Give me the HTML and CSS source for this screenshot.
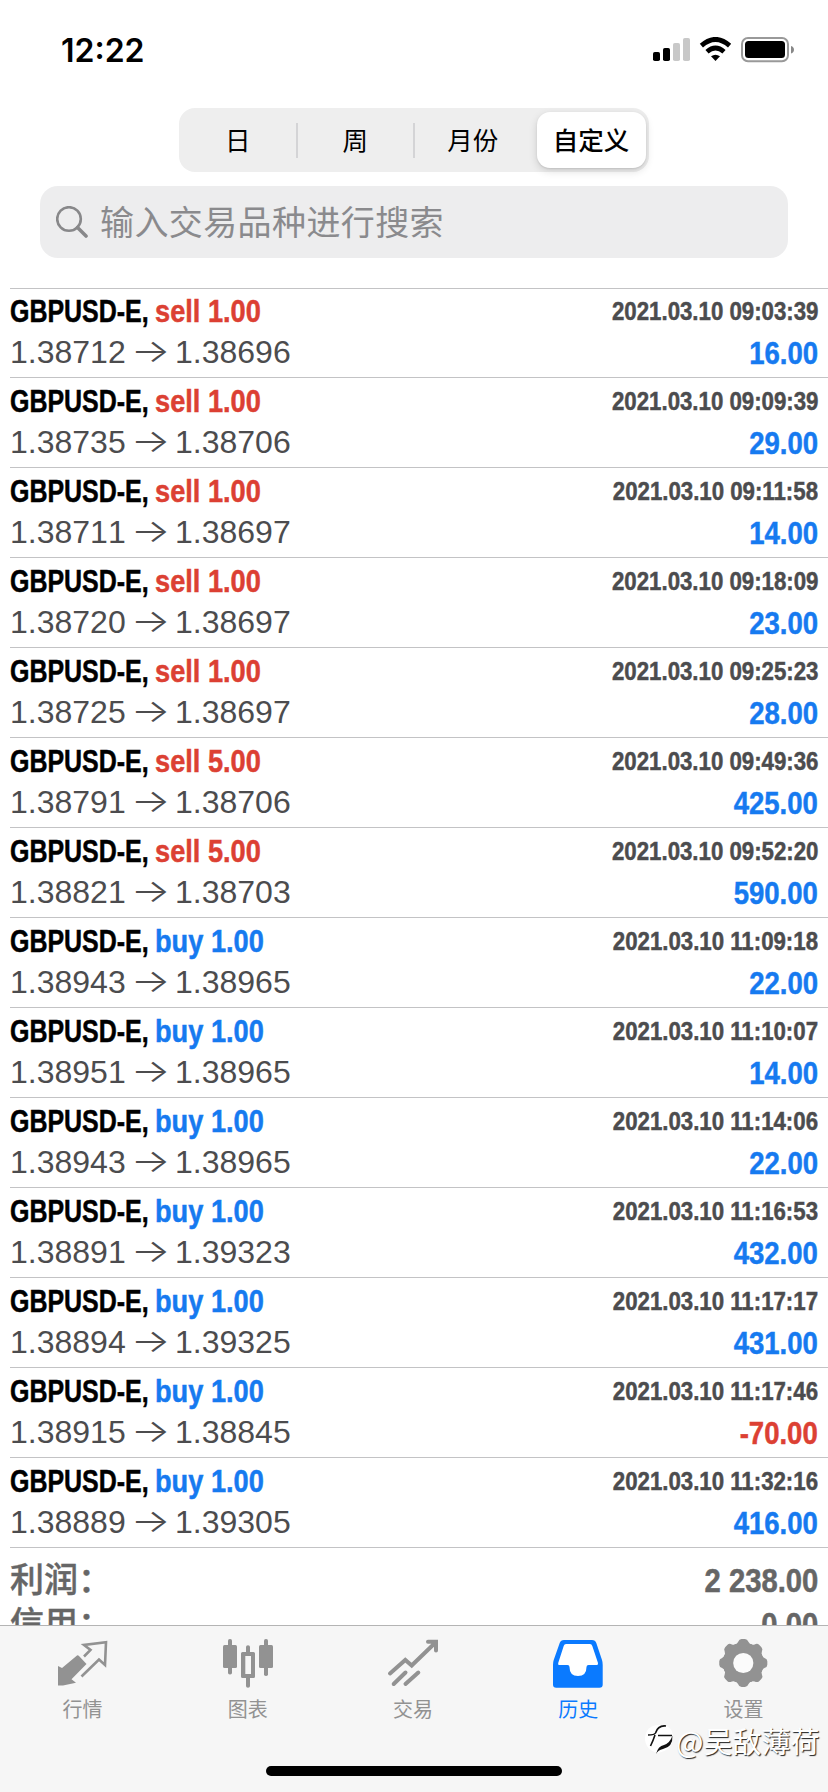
FILE: index.html
```html
<!DOCTYPE html>
<html lang="zh-CN">
<head>
<meta charset="utf-8">
<title>历史</title>
<link rel="stylesheet" href="styles.css">
</head>
<body>
<div class="screen">
  <header class="status">
    <span class="clock">12:22</span>
    <svg class="status-icons" width="142" height="26" viewBox="0 0 142 26">
      <rect x="0" y="15" width="7" height="9" rx="1.8"/>
      <rect x="10" y="11" width="7" height="13" rx="1.8"/>
      <g fill="#c8c8c8"><rect x="20" y="6" width="7" height="18" rx="1.8"/><rect x="30" y="1" width="7" height="23" rx="1.8"/></g>
      <g fill="none" stroke="#000" stroke-width="4.8"><path d="M48.400 8.600Q62.500-3.800 76.600 8.600"/><path d="M54 14.700Q62.500 7.400 71 14.700"/></g>
      <path d="M58 19.300Q62.500 16 67 19.300L62.500 24Z"/>
      <rect x="89" y="1" width="46" height="23.200" rx="6" fill="none" stroke="#999" stroke-width="2"/>
      <rect x="92" y="4" width="40" height="17" rx="3.500"/>
      <path d="M138 9Q141 10 141 12.700Q141 15.500 138 16.500Z" fill="#888"/>
    </svg>
  </header>
  <nav class="segments">
    <span class="seg">日</span><span class="seg seg-line">周</span><span class="seg seg-line">月份</span><span class="seg seg-on">自定义</span>
  </nav>
  <div class="search">
    <svg width="32" height="32" viewBox="0 0 32 32" fill="none" stroke="#88888a"><circle cx="13" cy="13" r="11.800" stroke-width="2.600"/><path d="M21.500 21.500L30 30" stroke-width="3.600" stroke-linecap="round"/></svg>
    <span>输入交易品种进行搜索</span>
  </div>
  <main class="list" id="list"></main>
  <section class="totals">
    <div class="total"><span>利润：</span><span class="sum">2 238.00</span></div>
    <div class="total"><span>信用：</span><span class="sum">0.00</span></div>
  </section>
  <footer class="tabs">
    <div class="tab">
      <svg width="50" height="50" viewBox="0 0 50 50"><path d="M0 28L4 30L19 17.500Q20 17 21 18L28.500 26L13.500 41.300L18 44.700L5 47.500H0Z" fill="#929292"/><path d="M26 18.500L32.500 12L26 7L48 4.300L47 27L41 21.500L23.500 38.500" fill="none" stroke="#929292" stroke-width="2.600"/></svg>
      <span>行情</span>
    </div>
    <div class="tab">
      <svg width="50" height="50" viewBox="0 0 50 50" fill="#929292"><rect x="0" y="7" width="14" height="23" rx="1.500"/><rect x="5" y="1" width="4" height="35.500" rx="1.800"/><path fill-rule="evenodd" d="M19.500 14H30.500Q32 14 32 15.500V38.500Q32 40 30.500 40H19.500Q18 40 18 38.500V15.500Q18 14 19.500 14ZM22.300 18V36H28V18Z"/><path d="M23 14V9Q23 7.300 25 7.300Q27 7.300 27 9V14ZM23 40V48Q23 49.700 25 49.700Q27 49.700 27 48V40Z"/><rect x="36" y="7" width="14" height="23" rx="1.500"/><rect x="41" y="1" width="4" height="37" rx="1.800"/></svg>
      <span>图表</span>
    </div>
    <div class="tab">
      <svg width="50" height="50" viewBox="0 0 50 50" fill="none" stroke="#929292" stroke-width="4" stroke-linecap="round"><path d="M2 35.500L17.300 22L23.700 27.500L47 5M40 3.700H48V12.500M5.700 46L17.500 34.500M17.500 46L30.300 34.500"/></svg>
      <span>交易</span>
    </div>
    <div class="tab tab-on">
      <svg width="50" height="50" viewBox="0 0 50 50"><path d="M11 2H39Q42.300 2 43.300 5L49 22Q49.700 24 49.700 27V46.500Q49.700 49.700 46.500 49.700H3.200Q0 49.700 0 46.500V27Q0 24 .7 22L6.700 5Q7.700 2 11 2Z" fill="#0a7aff"/><path d="M13 6H37Q38.700 6 39.300 8L45 25Q45.300 27 44 27H35.500Q33.500 27 33.500 29Q33.500 38 25 38Q16.500 38 16.500 29Q16.500 27 14.500 27H6Q4.700 27 5.200 25L10.700 8Q11.300 6 13 6Z" fill="#fff"/></svg>
      <span>历史</span>
    </div>
    <div class="tab">
      <svg width="50" height="52" viewBox="0 0 50 52" fill="#929292"><circle cx="25.300" cy="26" r="21"/><path id="tooth" d="M16 7Q19 6.500 20 4Q21 1 23.500 1H27Q29.500 1 30.600 4Q31.600 6.500 34.600 7V45Q31.600 45.500 30.600 48Q29.500 51 27 51H23.500Q21 51 20 48Q19 45.500 16 45Z"/><use href="#tooth" transform="rotate(45 25.300 26)"/><use href="#tooth" transform="rotate(90 25.300 26)"/><use href="#tooth" transform="rotate(135 25.300 26)"/><circle cx="25.300" cy="26" r="10.500" fill="#fbfbfb"/></svg>
      <span>设置</span>
    </div>
    <div class="home"></div>
    <div class="mark">
      <svg width="32" height="34" viewBox="0 0 32 34"><path d="M16 2Q29 2 29 15Q28 27 14 30Q1 27 1 15Q2 2 16 2Z" fill="#fff"/><path d="M22 3Q14 2 11.500 10Q10.500 12 4 12M11 12Q9 18 6.500 23M14 12.500H28" fill="none" stroke="#111" stroke-width="1.600"/><path d="M28.500 12.500Q29 24 19 26Q14 27 12 31Q14 23 20 22Q26 20 28.500 12.500Z" fill="#111"/></svg>
      <span>@吴敌薄荷</span>
    </div>
  </footer>
</div>
<script src="history.js"></script>
</body>
</html>
```
FILE: styles.css
```css
* { box-sizing: border-box; }
body { margin: 0; background: #fff; }
.screen {
  width: 828px; height: 1792px; overflow: hidden;
  display: flex; flex-direction: column;
  font-family: "Liberation Sans", "Noto Sans CJK SC", sans-serif;
  font-kerning: none;
}
.status {
  flex: none; height: 108px; padding: 37px 33px 0 61px;
  display: flex; justify-content: space-between; align-items: flex-start;
}
.clock { font: 600 32px/27px Inter, sans-serif; letter-spacing: 0; }
.segments {
  flex: none; width: 470px; height: 64px; margin-left: 179px; border-radius: 16px;
  background: #eeeeee; display: flex; align-items: center;
  font: 400 25.500px/40px "Noto Sans CJK SC", sans-serif;
}
.seg { width: 117.500px; text-align: center; height: 35px; line-height: 32px; }
.seg-line { box-shadow: -1px 0 0 #d4d4d6, inset 1px 0 0 #d4d4d6; }
.seg-on {
  width: 109px; height: 56px; margin-left: 5px; line-height: 53px; border-radius: 13px;
  background: #fff; font-weight: 500; box-shadow: 0 3px 8px rgba(0, 0, 0, .14), 0 1px 2px rgba(0, 0, 0, .1);
}
.search {
  flex: none; width: 748px; height: 72px; margin: 14px 0 30px 40px; padding-left: 16px;
  border-radius: 18px; background: #ededee; color: #8a8a8d;
  display: flex; align-items: center; gap: 12px;
  font: 400 34px/68px "Noto Sans CJK SC", sans-serif; letter-spacing: .4px;
}
.search span { padding-bottom: 2px; }
.list { flex: none; margin-left: 10px; box-shadow: inset 0 1px 0 #c3c3c5; }
.row {
  height: 90px; border-bottom: 1px solid #c3c3c5; padding: 3px 10px 0 0;
  display: flex; justify-content: space-between;
}
.left, .right { display: flex; flex-direction: column; }
.right { align-items: flex-end; }
.deal, .time, .profit, .sum { -webkit-text-stroke: .5px currentColor; }
.deal { display: flex; height: 41px; font: bold 32px/40px "Liberation Sans", sans-serif; }
.name { width: 145px; white-space: nowrap; transform: scaleX(.78); transform-origin: left; }
.side { white-space: nowrap; transform: scaleX(.85); transform-origin: left; }
.prices { display: flex; height: 40px; font-size: 32px; line-height: 40px; color: #4c4c4e; }
.price { width: 125px; }
.arrow { width: 40px; font: 300 32px/38px Inter, sans-serif; transform: scaleX(1.3); transform-origin: 14px; }
.time {
  height: 42px; font: bold 26px/40px "Liberation Sans", sans-serif; color: #4c4c4e;
  transform: scaleX(.855); transform-origin: right;
}
.profit { font: bold 32px/40px "Liberation Sans", sans-serif; transform: scaleX(.86); transform-origin: right; }
.sell, .loss { color: #dc4033; }
.buy, .gain { color: #167af0; }
.totals { flex: 1; min-height: 0; overflow: hidden; padding: 8px 10px 0 10px; color: #666; }
.total { height: 44px; display: flex; justify-content: space-between; font: 700 34px/44px "Noto Sans CJK SC", sans-serif; }
.total { font-weight: 500; -webkit-text-stroke: .4px currentColor; }
.sum { font: bold 34px/48px "Liberation Sans", sans-serif; transform: scaleX(.86); transform-origin: right; }
.tabs {
  flex: none; position: relative; height: 167px; padding: 12px 2px 0 0;
  background: #f6f6f6; border-top: 1px solid #b4b4b4; display: flex;
}
.tab {
  flex: 1; display: flex; flex-direction: column; align-items: center;
  color: #929292; font: 400 20px/28px "Noto Sans CJK SC", sans-serif;
}
.tab svg { height: 50px; overflow: visible; }
.tab span { margin-top: 7px; }
.tab-on { color: #0a7aff; }
.home { position: absolute; left: 266px; top: 140px; width: 296px; height: 10px; border-radius: 5px; background: #000; }
.mark {
  position: absolute; left: 644px; top: 95px; display: flex; align-items: center;
  color: #fff; font: 400 29px/38px "Noto Sans CJK SC", sans-serif; white-space: nowrap;
  text-shadow: 1px 1px 1px #222;
}
```
FILE: history.js
```js
const deals = [
  ["sell 1.00", "1.38712", "1.38696", "09:03:39", "16.00"],
  ["sell 1.00", "1.38735", "1.38706", "09:09:39", "29.00"],
  ["sell 1.00", "1.38711", "1.38697", "09:11:58", "14.00"],
  ["sell 1.00", "1.38720", "1.38697", "09:18:09", "23.00"],
  ["sell 1.00", "1.38725", "1.38697", "09:25:23", "28.00"],
  ["sell 5.00", "1.38791", "1.38706", "09:49:36", "425.00"],
  ["sell 5.00", "1.38821", "1.38703", "09:52:20", "590.00"],
  ["buy 1.00", "1.38943", "1.38965", "11:09:18", "22.00"],
  ["buy 1.00", "1.38951", "1.38965", "11:10:07", "14.00"],
  ["buy 1.00", "1.38943", "1.38965", "11:14:06", "22.00"],
  ["buy 1.00", "1.38891", "1.39323", "11:16:53", "432.00"],
  ["buy 1.00", "1.38894", "1.39325", "11:17:17", "431.00"],
  ["buy 1.00", "1.38915", "1.38845", "11:17:46", "-70.00"],
  ["buy 1.00", "1.38889", "1.39305", "11:32:16", "416.00"]
];
document.getElementById("list").innerHTML = deals.map(([side, open, close, time, profit]) => `
  <div class="row">
    <div class="left">
      <div class="deal"><span class="name">GBPUSD-E,</span><span class="side ${side.split(" ")[0]}">${side}</span></div>
      <div class="prices"><span class="price">${open}</span><span class="arrow">→</span><span class="price">${close}</span></div>
    </div>
    <div class="right">
      <div class="time">2021.03.10 ${time}</div>
      <div class="profit ${profit[0] === "-" ? "loss" : "gain"}">${profit}</div>
    </div>
  </div>`).join("");
```
